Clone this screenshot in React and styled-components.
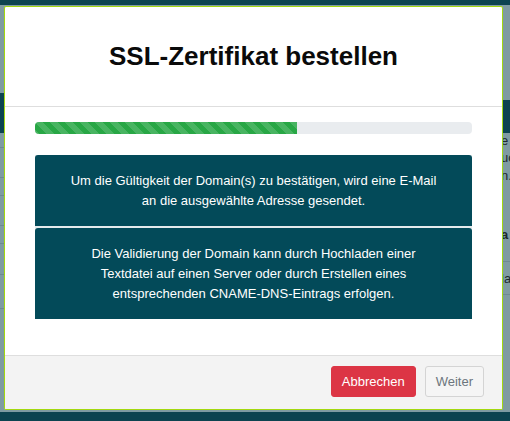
import React from "react";
import styled, { createGlobalStyle } from "styled-components";

const Global = createGlobalStyle`
  html, body { margin: 0; padding: 0; }
  body {
    width: 510px;
    height: 421px;
    overflow: hidden;
    font-family: "Liberation Sans", Arial, sans-serif;
    background: #7f9ba2;
  }
`;

const Page = styled.div`
  width: 510px;
  height: 421px;
  display: flex;
  flex-direction: column;
  background: #7f9ba2;
`;

const TopBar = styled.div`
  height: 5px;
  background: #0c4350;
`;

const PageBody = styled.div`
  flex: 1;
  display: flex;
  justify-content: space-between;
`;

const SideColumn = styled.div`
  width: 8px;
  display: flex;
  flex-direction: column;
  overflow: hidden;
`;

const SideBlock = styled.div`
  height: ${(p) => p.$h}px;
  flex-shrink: 0;
  box-sizing: border-box;
  background: ${(p) => p.$bg || "transparent"};
  border-bottom: ${(p) => (p.$line ? "1px solid #6e8a91" : "none")};
  font-size: 13px;
  line-height: ${(p) => p.$h}px;
  color: #1c2a2e;
  font-weight: ${(p) => (p.$bold ? "bold" : "normal")};
  white-space: nowrap;
  text-indent: -1px;
`;

const BottomBar = styled.div`
  height: 9px;
  background: #0c4350;
`;

const Overlay = styled.div`
  position: fixed;
  left: 4px;
  top: 6px;
  width: 499px;
  height: 404px;
  box-sizing: border-box;
  border: 1px solid #a3d80f;
  background: #fff;
  display: flex;
  flex-direction: column;
  border-radius: 2px;
  overflow: hidden;
`;

const Header = styled.div`
  height: 100px;
  flex-shrink: 0;
  box-sizing: border-box;
  border-bottom: 1px solid #dedede;
  display: flex;
  align-items: center;
  justify-content: center;
`;

const Title = styled.h1`
  margin: 0;
  font-size: 26px;
  font-weight: bold;
  color: #0a0a0a;
`;

const Body = styled.div`
  flex: 1;
  padding: 15px 30px 0 30px;
  display: flex;
  flex-direction: column;
`;

const Progress = styled.div`
  height: 12px;
  border-radius: 4px;
  background: #e9ecef;
  overflow: hidden;
  margin-bottom: 21px;
`;

const ProgressFill = styled.div`
  height: 100%;
  background-color: #28a745;
  background-image: linear-gradient(
    45deg,
    rgba(255, 255, 255, 0.15) 25%,
    transparent 25%,
    transparent 50%,
    rgba(255, 255, 255, 0.15) 50%,
    rgba(255, 255, 255, 0.15) 75%,
    transparent 75%,
    transparent
  );
  background-size: 15px 15px;
`;

const Cards = styled.div`
  display: flex;
  flex-direction: column;
  gap: 2px;
  background: #e4eaec;
`;

const Card = styled.div`
  background: #034a59;
  color: #fff;
  border-radius: 3px 3px 0 0;
  padding: 16px 30px 15px;
  text-align: center;
  font-size: 13px;
  line-height: 20px;
`;

const Footer = styled.div`
  height: 54px;
  flex-shrink: 0;
  box-sizing: border-box;
  background: #f3f3f3;
  border-top: 1px solid #dedede;
  display: flex;
  justify-content: flex-end;
  align-items: flex-start;
  padding: 10px 18px 0 0;
  gap: 9px;
`;

const Button = styled.button`
  font-family: "Liberation Sans", Arial, sans-serif;
  font-size: 13px;
  height: 31px;
  padding: 0 10px;
  border-radius: 3px;
  cursor: pointer;
  border: 1px solid ${(p) => (p.$variant === "danger" ? "#dc3545" : "#d4d4d4")};
  background: ${(p) => (p.$variant === "danger" ? "#dc3545" : "#f5f5f5")};
  color: ${(p) => (p.$variant === "danger" ? "#fff" : "#6c757d")};
`;

export default function App() {
  const progress = 60;
  return (
    <>
      <Global />
      <Page>
        <TopBar />
        <PageBody>
          <SideColumn>
            <SideBlock $h={88} />
            <SideBlock $h={40} $bg="#0c4350" />
            <SideBlock $h={15} $line />
            <SideBlock $h={30} $line />
            <SideBlock $h={18} $line />
            <SideBlock $h={30} $line />
            <SideBlock $h={18} $line />
            <SideBlock $h={31} $line />
            <SideBlock $h={34} $line />
          </SideColumn>
          <SideColumn>
            <SideBlock $h={95} />
            <SideBlock $h={33} $bg="#0c4350" />
            <SideBlock $h={16}>e</SideBlock>
            <SideBlock $h={18}>uc</SideBlock>
            <SideBlock $h={18}>n.</SideBlock>
            <SideBlock $h={40} />
            <SideBlock $h={20} $bold>a</SideBlock>
            <SideBlock $h={17} $line />
            <SideBlock $h={33} $line>la</SideBlock>
          </SideColumn>
        </PageBody>
        <BottomBar />
      </Page>
      <Overlay role="dialog">
        <Header>
          <Title>SSL-Zertifikat bestellen</Title>
        </Header>
        <Body>
          <Progress>
            <ProgressFill style={{ width: `${progress}%` }} />
          </Progress>
          <Cards>
            <Card>
              Um die Gültigkeit der Domain(s) zu bestätigen, wird eine E-Mail an
              die ausgewählte Adresse gesendet.
            </Card>
            <Card>
              Die Validierung der Domain kann durch Hochladen einer Textdatei
              auf einen Server oder durch Erstellen eines entsprechenden
              CNAME-DNS-Eintrags erfolgen.
            </Card>
          </Cards>
        </Body>
        <Footer>
          <Button $variant="danger">Abbrechen</Button>
          <Button>Weiter</Button>
        </Footer>
      </Overlay>
    </>
  );
}
